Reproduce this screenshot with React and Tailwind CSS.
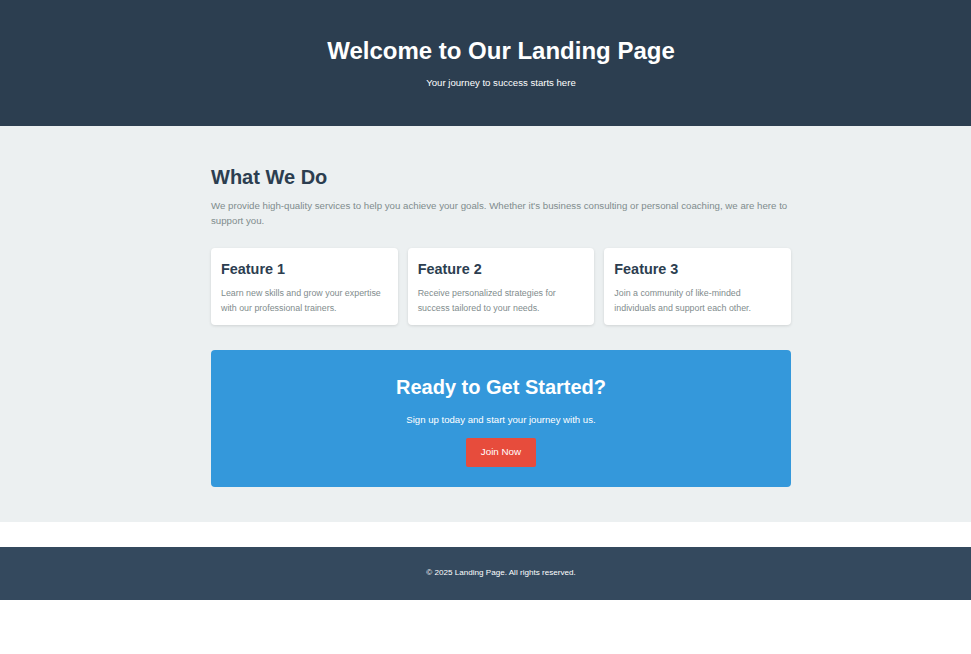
export default function App() {
  const features = [
    { title: 'Feature 1', text: 'Learn new skills and grow your expertise with our professional trainers.' },
    { title: 'Feature 2', text: 'Receive personalized strategies for success tailored to your needs.' },
    { title: 'Feature 3', text: 'Join a community of like-minded individuals and support each other.' },
  ]

  return (
    <div className="font-['Liberation_Sans',Arial,sans-serif] bg-white min-h-[654px]">
      <header className="bg-[#2c3e50] text-white text-center h-[126px] pt-[37px] pl-[31px]">
        <h1 className="text-[24px] font-bold leading-[28px]">Welcome to Our Landing Page</h1>
        <p className="text-[9.6px] mt-[12px] leading-[12px]">Your journey to success starts here</p>
      </header>

      <section className="bg-[#ecf0f1] h-[396px] pt-[39px] pl-[31px]">
        <div className="w-[580px] mx-auto">
          <h2 className="text-[20px] font-bold text-[#2c3e50] leading-[24px]">What We Do</h2>
          <p className="text-[9.7px] text-[#7f8c8d] leading-[15px] mt-[9px]">
            We provide high-quality services to help you achieve your goals. Whether it's business consulting or personal coaching, we are here to support you.
          </p>
          <div className="grid grid-cols-3 gap-[10px] mt-[20px]">
            {features.map((f) => (
              <div key={f.title} className="bg-white rounded-[4px] shadow-[0_1px_3px_rgba(0,0,0,0.12)] px-[10px] pt-[13px] pb-[10px] h-[77px]">
                <h3 className="text-[14.4px] font-bold text-[#2c3e50] leading-[17px]">{f.title}</h3>
                <p className="text-[8.85px] text-[#7f8c8d] leading-[15px] mt-[8px]">{f.text}</p>
              </div>
            ))}
          </div>
          <div className="bg-[#3498db] rounded-[4px] mt-[25px] h-[137px] text-center text-white pt-[25px]">
            <h2 className="text-[20px] font-bold leading-[24px]">Ready to Get Started?</h2>
            <p className="text-[9.6px] leading-[12px] mt-[15px]">Sign up today and start your journey with us.</p>
            <button className="bg-[#e74c3c] text-white text-[9.8px] w-[70px] h-[29px] rounded-[2px] mt-[12px]">Join Now</button>
          </div>
        </div>
      </section>

      <footer className="bg-[#34495e] text-white text-center mt-[25px] h-[53px] flex items-center justify-center pl-[31px]">
        <p className="text-[8.1px]">© 2025 Landing Page. All rights reserved.</p>
      </footer>
    </div>
  )
}
